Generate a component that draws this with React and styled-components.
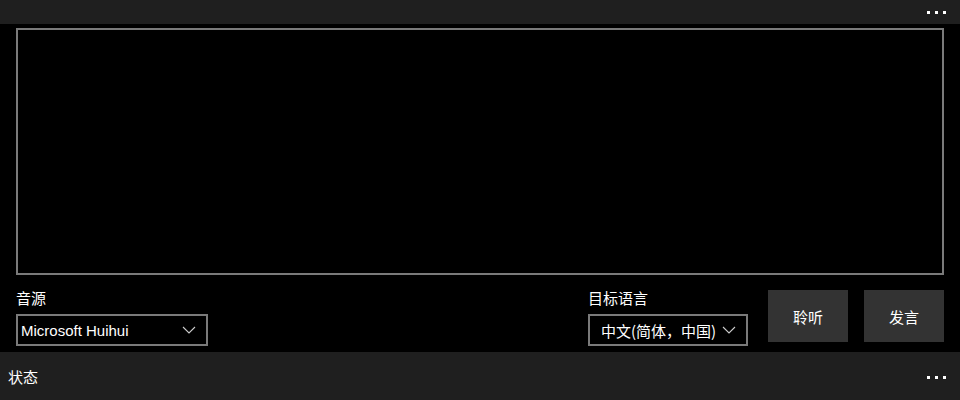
import React from "react";
import styled, { createGlobalStyle } from "styled-components";

const GlobalStyle = createGlobalStyle`
  html, body {
    margin: 0;
    padding: 0;
    background: #000000;
  }
  body {
    font-family: "Noto Sans CJK SC", "Noto Sans", sans-serif;
    color: #ffffff;
  }
`;

const Page = styled.div`
  width: 960px;
  height: 400px;
  display: flex;
  flex-direction: column;
  background: #000000;
  overflow: hidden;
`;

const TopBar = styled.div`
  height: 24px;
  background: #1f1f1f;
  display: flex;
  justify-content: flex-end;
  align-items: center;
  padding-right: 14px;
`;

const Dots = styled.div`
  display: flex;
  gap: 5px;
  align-items: center;
  margin-top: ${(props) => props.offset || 0}px;
`;

const Dot = styled.span`
  width: 3px;
  height: 3px;
  background: #ffffff;
  display: block;
`;

const Main = styled.div`
  flex: 1;
  display: flex;
  flex-direction: column;
  padding: 4px 16px 0;
`;

const TextArea = styled.div`
  height: 247px;
  border: 2px solid #7a7a7a;
  box-sizing: border-box;
  background: #000000;
`;

const Controls = styled.div`
  display: flex;
  align-items: flex-start;
  margin-top: 14px;
`;

const Field = styled.div`
  display: flex;
  flex-direction: column;
`;

const Label = styled.div`
  font-size: 15px;
  line-height: 18px;
  height: 18px;
  margin-bottom: 7px;
`;

const Combo = styled.div`
  width: ${(props) => props.width}px;
  height: 32px;
  box-sizing: border-box;
  border: 2px solid #7a7a7a;
  display: flex;
  align-items: center;
  padding-left: ${(props) => props.pad}px;
  padding-right: 10px;
  font-size: 15px;
`;

const ComboText = styled.span`
  flex: 1;
  white-space: nowrap;
  font-family: ${(props) =>
    props.latin
      ? '"Liberation Sans", "Noto Sans", sans-serif'
      : '"Noto Sans CJK SC", sans-serif'};
`;

const Spacer = styled.div`
  flex: 1;
`;

const Button = styled.div`
  width: 80px;
  height: 52px;
  background: #333333;
  display: flex;
  align-items: center;
  justify-content: center;
  font-size: 15px;
  margin-left: ${(props) => props.gap}px;
  margin-top: 1px;
`;

const BottomBar = styled.div`
  height: 48px;
  background: #1f1f1f;
  display: flex;
  align-items: center;
  justify-content: space-between;
  padding: 0 14px 0 8px;
`;

const Status = styled.span`
  font-size: 15px;
`;

const Chevron = () => (
  <svg width="14" height="8" viewBox="0 0 14 8">
    <path d="M1 1 L7 7 L13 1" fill="none" stroke="#cccccc" strokeWidth="1.1" />
  </svg>
);

const More = ({ offset }) => (
  <Dots offset={offset}>
    <Dot />
    <Dot />
    <Dot />
  </Dots>
);

export default function App() {
  return (
    <Page>
      <GlobalStyle />
      <TopBar>
        <More offset={1} />
      </TopBar>
      <Main>
        <TextArea />
        <Controls>
          <Field>
            <Label>音源</Label>
            <Combo width={192} pad={3}>
              <ComboText latin>Microsoft Huihui</ComboText>
              <Chevron />
            </Combo>
          </Field>
          <Spacer />
          <Field>
            <Label>目标语言</Label>
            <Combo width={160} pad={11}>
              <ComboText>中文(简体，中国)</ComboText>
              <Chevron />
            </Combo>
          </Field>
          <Button gap={20}>聆听</Button>
          <Button gap={16}>发言</Button>
        </Controls>
      </Main>
      <BottomBar>
        <Status>状态</Status>
        <More offset={2} />
      </BottomBar>
    </Page>
  );
}
